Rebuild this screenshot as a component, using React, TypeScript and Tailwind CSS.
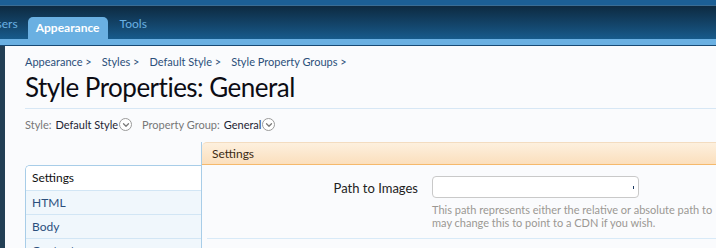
import { ChevronDown } from "lucide-react";

const crumbs = ["Appearance", "Styles", "Default Style", "Style Property Groups"];
const navItems = ["HTML", "Body", "Content"];

function DropCircle() {
  return (
    <span className="ml-px inline-flex h-[13px] w-[13px] items-center justify-center rounded-full border border-[#9a9a9a] bg-white">
      <ChevronDown size={10} strokeWidth={3} className="text-[#7a7a7a]" />
    </span>
  );
}

export default function App() {
  return (
    <div
      className="h-[248px] w-[716px] overflow-hidden bg-[#fafbfd]"
      style={{ fontFamily: "Lato, 'Liberation Sans', sans-serif" }}
    >
      {/* header */}
      <div className="h-[5px] bg-[#1c5f95]" />
      <div className="h-px bg-[#3a6c93]" />
      <div className="flex h-[33px] items-end bg-gradient-to-b from-[#0d2a41] to-[#175b8c]">
        <div className="-ml-[22px] flex items-end text-[12px]">
          <span className="px-[10px] pb-[6px] text-[#6ab0e2]">Users</span>
          <span className="flex h-[22px] w-[80px] items-center justify-center rounded-t-[5px] bg-[#6ab0e2] font-bold text-white">
            Appearance
          </span>
          <span className="px-[12px] pb-[6px] text-[#6ab0e2]">Tools</span>
        </div>
      </div>
      <div className="h-[6px] bg-[#6ab0e2]" />
      <div className="h-px bg-[#184a75]" />

      <div className="flex h-[202px]">
        <div className="w-[5px] shrink-0 bg-[#223f55]" />
        <div className="flex-1 pl-[20px]">
          {/* breadcrumb */}
          <div className="mt-[8px] flex gap-[10px] text-[11px] text-[#2b4f7a]">
            {crumbs.map((c) => (
              <span key={c}>{c} &gt;</span>
            ))}
          </div>
          <h1 className="mt-0 text-[26px] leading-[32px] tracking-[-0.5px] text-[#0c0c14]">
            Style Properties: General
          </h1>
          <div className="mt-[5px] h-px bg-[#d7e7f5]" />

          <div className="mt-[8px] flex items-center text-[11px]">
            <span className="text-[#777]">Style:</span>
            <span className="ml-[4px] text-[#1d2433]">Default Style</span>
            <DropCircle />
            <span className="ml-[10px] text-[#777]">Property Group:</span>
            <span className="ml-[4px] text-[#1d2433]">General</span>
            <DropCircle />
          </div>

          {/* settings area */}
          <div className="mt-[9px] flex">
            <div className="mt-[23px] w-[176px] shrink-0 overflow-hidden rounded-tl-[5px] border-l border-t border-[#a8cde8] text-[12px]">
              <div className="flex h-[24px] items-center bg-white pl-[6px] text-[#111]">
                Settings
              </div>
              {navItems.map((n) => (
                <div
                  key={n}
                  className="flex h-[24px] items-center border-t border-[#d2e6f5] bg-[#f0f7fc] pl-[6px] text-[#2b4f7d]"
                >
                  {n}
                </div>
              ))}
            </div>
            <div className="flex-1 border-l border-[#a8cde8]">
              <div className="flex h-[23px] items-center rounded-tl-[5px] border-b border-t border-b-[#f5b96c] border-t-[#f3dcc0] bg-gradient-to-b from-[#fdf0de] to-[#fbdfbd] pl-[10px] text-[12px] text-[#3c2b14]">
                Settings
              </div>
              <div className="flex pt-[11px]">
                <div className="w-[216px] pt-[3px] text-right text-[13px] text-[#222]">
                  Path to Images
                </div>
                <div className="ml-[14px]">
                  <div className="relative h-[22px] w-[207px] rounded-[4px] border border-[#c9c9c9] bg-white">
                    <span className="absolute right-[4px] top-[9px] h-[3px] w-px bg-[#1b3a63]" />
                  </div>
                  <p className="mt-[5px] whitespace-nowrap text-[11px] leading-[13px] text-[#9b9893]">
                    This path represents either the relative or absolute path to
                    <br />
                    may change this to point to a CDN if you wish.
                  </p>
                </div>
              </div>
              <div className="ml-[5px] mt-[9px] h-px bg-[#d8eaf8]" />
            </div>
          </div>
        </div>
      </div>
    </div>
  );
}
